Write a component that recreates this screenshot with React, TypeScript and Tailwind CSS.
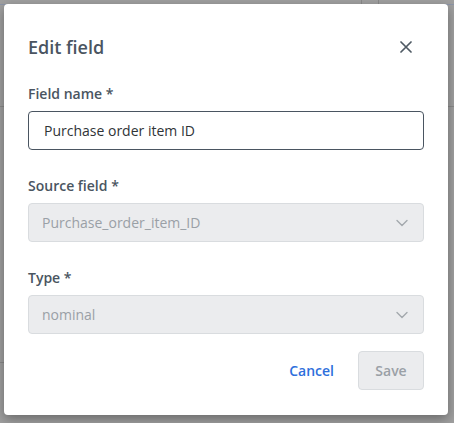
import React from "react";

const Chevron = () => (
  <svg width="14" height="14" viewBox="0 0 14 14" fill="none" className="text-[#a3a8ad]">
    <path d="M2 4.5 L7 9.5 L12 4.5" stroke="currentColor" strokeWidth="1.4" strokeLinecap="round" strokeLinejoin="round" />
  </svg>
);

export default function App() {
  return (
    <div className="relative w-[454px] h-[423px] overflow-hidden bg-[#a0a0a0]" style={{ fontFamily: '"Open Sans", "Noto Sans", sans-serif' }}>
      {/* faint background page */}
      <div className="absolute left-0 top-[4px] w-full h-px bg-[#8d96a8]" />
      <div className="absolute left-[361px] top-0 w-px h-[4px] bg-[#8a8a8a]" />
      <div className="absolute left-[378px] top-0 w-px h-[4px] bg-[#8a8a8a]" />
      <div className="absolute left-0 top-[106px] w-[4px] h-px bg-[#8a8a8a]" />
      <div className="absolute left-0 top-[362px] w-[4px] h-px bg-[#8a8a8a]" />
      <div className="absolute left-[448px] top-[106px] w-[6px] h-px bg-[#8a8a8a]" />

      <div className="absolute left-[4px] top-[4px] w-[444px] h-[411px] bg-white rounded-[4px] shadow-[0_4px_12px_rgba(0,0,0,0.35)] px-[24px] pt-[31px] flex flex-col">
        <div className="flex items-center justify-between h-[24px]">
          <h2 className="text-[18px] font-semibold text-[#4a5561] leading-[24px]">Edit field</h2>
          <svg width="12" height="12" viewBox="0 0 12 12" className="mr-[12px]">
            <path d="M1 1 L11 11 M11 1 L1 11" stroke="#4f5a64" strokeWidth="1.7" strokeLinecap="round" />
          </svg>
        </div>

        <label className="mt-[25px] text-[14px] font-semibold text-[#4a5561] leading-[20px]">Field name *</label>
        <div className="mt-[7px] h-[39px] border border-[#4a5561] rounded-[4px] flex items-center px-[15px] text-[14px] text-[#2f3437]">
          Purchase order item ID
        </div>

        <label className="mt-[26px] text-[14px] font-semibold text-[#4a5561] leading-[20px]">Source field *</label>
        <div className="mt-[7px] h-[39px] border border-[#d9dcdf] bg-[#ebecee] rounded-[4px] flex items-center justify-between pl-[13px] pr-[14px] text-[14px] text-[#9aa0a6]">
          <span>Purchase_order_item_ID</span>
          <Chevron />
        </div>

        <label className="mt-[26px] text-[14px] font-semibold text-[#4a5561] leading-[20px]">Type *</label>
        <div className="mt-[7px] h-[39px] border border-[#d9dcdf] bg-[#ebecee] rounded-[4px] flex items-center justify-between pl-[13px] pr-[14px] text-[14px] text-[#9aa0a6]">
          <span>nominal</span>
          <Chevron />
        </div>

        <div className="mt-[17px] flex items-center justify-end gap-[24px]">
          <button className="text-[14px] font-semibold text-[#2e6fdc]">Cancel</button>
          <button className="h-[39px] w-[66px] border border-[#d9dcdf] bg-[#ebecee] rounded-[4px] text-[14px] font-semibold text-[#9aa0a6]">Save</button>
        </div>
      </div>
    </div>
  );
}
